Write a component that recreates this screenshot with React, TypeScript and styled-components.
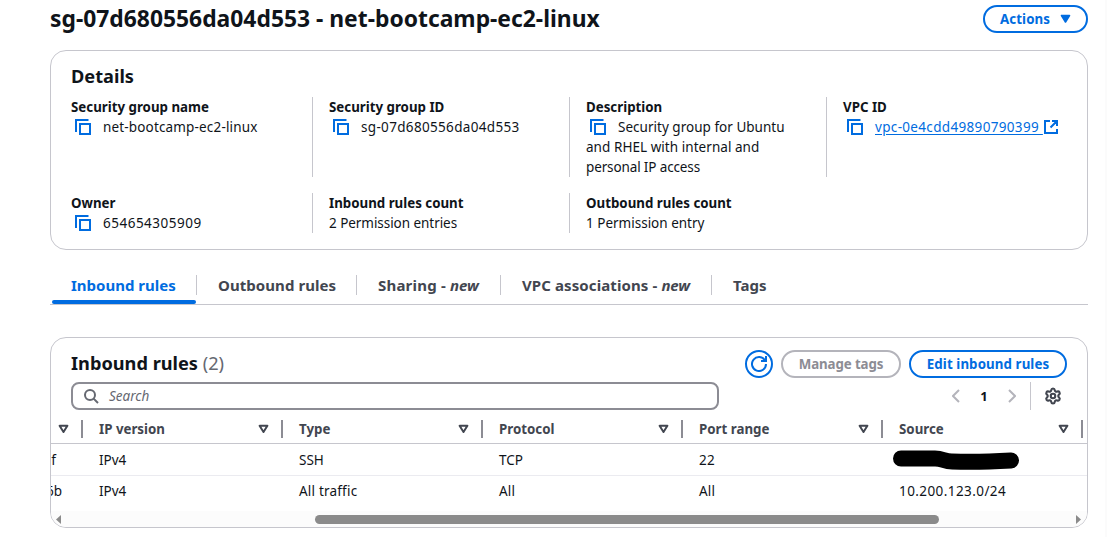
import React from 'react';
import styled, { createGlobalStyle, css } from 'styled-components';
import { Settings } from 'lucide-react';

const blue = '#006ce0';
const ink = '#0f141a';
const slate = '#424650';
const line = '#c6c6cd';

const GlobalStyle = createGlobalStyle`
  *, *::before, *::after { box-sizing: border-box; }
  body {
    margin: 0;
    background: #fff;
    color: ${ink};
    font: 400 13.5px/20px 'Noto Sans', 'Open Sans', sans-serif;
    overflow: hidden;
  }
  svg { display: block; flex: none; }
`;

const Page = styled.main`
  height: 537px;
  padding: 0 17px 0 50px;
  border-right: 2px solid #fbfbfb;
`;

const TitleBar = styled.header`
  display: flex;
  justify-content: space-between;
  height: 50px;
  padding-top: 5px;
`;

const Title = styled.h1`
  margin: -1px 0 0;
  font-size: 22.85px;
  line-height: 30px;
  font-weight: 700;
  white-space: nowrap;
`;

const Button = styled.button<{ $width: number; $disabled?: boolean; $ls?: number }>`
  display: flex;
  align-items: center;
  justify-content: center;
  gap: 10px;
  width: ${(p) => p.$width}px;
  height: 28px;
  padding: 0;
  border: 2px solid ${(p) => (p.$disabled ? '#b4b4bb' : blue)};
  border-radius: 14px;
  background: #fff;
  color: ${(p) => (p.$disabled ? '#8c8c94' : blue)};
  font: 700 13.3px/20px 'Noto Sans', sans-serif;
  letter-spacing: ${(p) => p.$ls ?? 0}px;
  white-space: nowrap;
`;

const Card = styled.section`
  border: 1px solid ${line};
  border-radius: 16px;
  background: #fff;
  overflow: hidden;
`;

const DetailsCard = styled(Card)`
  height: 200px;
  padding: 14px 20px 0;
`;

const CardTitle = styled.h2`
  margin: 0;
  font-size: 18.2px;
  line-height: 22px;
  font-weight: 700;
`;

const Count = styled.span`
  font-weight: 400;
  color: #656871;
`;

const DetailGrid = styled.dl`
  display: grid;
  grid-template-columns: 241px 257px 257px 1fr;
  grid-template-rows: 80px 40px;
  row-gap: 16px;
  margin: 10px 0 0;
`;

const Detail = styled.div<{ $divided?: boolean }>`
  white-space: nowrap;
  ${(p) =>
    p.$divided &&
    css`
      padding-left: 16px;
      border-left: 1px solid ${line};
    `}
`;

const Label = styled.dt`
  font-size: 13.3px;
  font-weight: 700;
`;

const Value = styled.dd`
  margin: 0;
`;

const ValueLine = styled.span<{ $ls?: number }>`
  display: flex;
  align-items: center;
  height: 20px;
  letter-spacing: ${(p) => p.$ls ?? 0}px;
`;

const CopySlot = styled.span`
  padding: 0 12px 0 4px;
`;

const VpcLink = styled.a`
  display: flex;
  align-items: center;
  color: ${blue};
  white-space: pre;
  text-decoration: underline;
  text-underline-offset: 2px;
`;

const TabBar = styled.nav`
  display: flex;
  height: 33px;
  margin-top: 22px;
  border-bottom: 1px solid ${line};
`;

const Tab = styled.a<{ $width: number; $active?: boolean; $last?: boolean; $ls?: number }>`
  position: relative;
  width: ${(p) => p.$width}px;
  height: 20px;
  margin-top: 3px;
  padding-left: 21px;
  border-right: ${(p) => (p.$last ? 0 : 1)}px solid ${line};
  color: ${(p) => (p.$active ? blue : slate)};
  font-size: 15px;
  font-weight: 700;
  letter-spacing: ${(p) => p.$ls ?? 0}px;
  white-space: nowrap;
  &::after {
    content: '';
    display: ${(p) => (p.$active ? 'block' : 'none')};
    position: absolute;
    left: 2px;
    right: 0;
    top: 25px;
    height: 4px;
    border-radius: 2px;
    background: ${blue};
  }
`;

const New = styled.em`
  letter-spacing: -0.1px;
`;

const RulesCard = styled(Card)`
  height: 191px;
  margin-top: 32px;
`;

const CardHeader = styled.div`
  display: flex;
  justify-content: space-between;
  height: 40px;
  padding: 12px 20px 0;
`;

const HeaderTitle = styled(CardTitle)`
  margin-top: 2px;
`;

const Buttons = styled.div`
  display: flex;
  gap: 8px;
`;

const Tools = styled.div`
  display: flex;
  justify-content: space-between;
  height: 36px;
  padding: 4px 25px 0 20px;
`;

const SearchBox = styled.label`
  display: flex;
  align-items: center;
  gap: 10px;
  width: 648px;
  height: 28px;
  padding-left: 10px;
  border: 2px solid #8c8c94;
  border-radius: 8px;
  color: #656871;
  font-style: italic;
`;

const Pager = styled.div`
  display: flex;
  align-items: center;
  height: 28px;
  font-size: 13px;
  font-weight: 700;
`;

const PageNumber = styled.span`
  width: 48px;
  text-align: center;
`;

const PagerRule = styled.span`
  width: 1px;
  height: 28px;
  margin: 0 13px 0 14px;
  background: ${line};
`;

const HeadRow = styled.div`
  display: flex;
  align-items: center;
  height: 30px;
  border-bottom: 1px solid ${line};
`;

const HeadCell = styled.div<{ $narrow?: boolean }>`
  display: flex;
  align-items: center;
  justify-content: space-between;
  flex: none;
  width: ${(p) => (p.$narrow ? 32 : 200)}px;
  height: 18px;
  padding: 0 12.5px 0 ${(p) => (p.$narrow ? 6.5 : 16)}px;
  border-right: 2px solid #8c8c94;
  color: ${slate};
  font-size: 13.3px;
  font-weight: 700;
`;

const Row = styled.div<{ $divided?: boolean }>`
  display: flex;
  align-items: center;
  height: ${(p) => (p.$divided ? 32 : 30)}px;
  border-bottom: ${(p) => (p.$divided ? 1 : 0)}px solid #ebebf0;
`;

const IdCell = styled.div<{ $tail: number }>`
  display: flex;
  justify-content: flex-end;
  flex: none;
  width: 32px;
  padding-right: ${(p) => p.$tail}px;
  overflow: hidden;
`;

const Cell = styled.div<{ $ls?: number }>`
  flex: none;
  width: 200px;
  padding-left: 16px;
  letter-spacing: ${(p) => p.$ls ?? 0}px;
`;

const RedactedCell = styled(Cell)`
  padding: 1px 0 0 10px;
`;

const ScrollTrack = styled.div`
  display: flex;
  align-items: center;
  height: 16px;
  margin-top: 5px;
  padding: 0 6px 0 5px;
  background: #fcfcfc;
`;

const ScrollLane = styled.div`
  flex: 1;
  padding-left: 254px;
`;

const ScrollThumb = styled.div`
  width: 624px;
  height: 9px;
  border-radius: 5px;
  background: #8b8b8b;
`;

const CopyIcon = () => (
  <svg width="16" height="16" fill="none" stroke={blue} strokeWidth="2">
    <path d="M1 13V1H13.5M5 5H15V15H5Z" />
  </svg>
);

const ExternalIcon = () => (
  <svg width="16" height="16" fill="none" stroke={blue} strokeWidth="2">
    <path d="M7 2H2V14H14V10M9 2H14V7M14 2L7.5 8.5" />
  </svg>
);

const RefreshIcon = () => (
  <svg width="16" height="16" fill="none" stroke={blue} strokeWidth="2">
    <path d="M15 8A7 7 0 1 1 14 4.4M15 0V5H10" />
  </svg>
);

const SearchIcon = () => (
  <svg width="16" height="16" fill="none" stroke="#656871" strokeWidth="2">
    <circle cx="7" cy="7" r="5" />
    <path d="M10.6 10.6L15 15" />
  </svg>
);

const CaretIcon = () => (
  <svg width="11" height="10">
    <path d="M1.5 1.5H9.5L5.5 8Z" fill={blue} stroke={blue} strokeWidth="1.6" strokeLinejoin="round" />
  </svg>
);

const SortIcon = () => (
  <svg width="11" height="10">
    <path d="M1.6 1.8H9.4L5.5 8Z" fill="none" stroke={slate} strokeWidth="2" strokeLinejoin="round" />
  </svg>
);

const Chevron = ({ next }: { next?: boolean }) => (
  <svg width="8" height="14" fill="none" stroke="#b4b4bb" strokeWidth="2">
    <path d={next ? 'M1 1L7 7L1 13' : 'M7 1L1 7L7 13'} />
  </svg>
);

const Redaction = () => (
  <svg width="127" height="20" fill="none" stroke="#000" strokeWidth="16" strokeLinecap="round" strokeLinejoin="round">
    <path d="M8 8.5H42C50 8.5 51 11.5 59 11.5C78 12.3 98 11.7 118 10.5" />
  </svg>
);

const ScrollArrow = ({ right }: { right?: boolean }) => (
  <svg width="5" height="9">
    <path d={right ? 'M0 0L5 4.5L0 9Z' : 'M5 0L0 4.5L5 9Z'} fill="#8b8b8b" />
  </svg>
);

const columns = ['IP version', 'Type', 'Protocol', 'Port range', 'Source'];

export default function App() {
  return (
    <Page>
      <GlobalStyle />
      <TitleBar>
        <Title>sg-07d680556da04d553 - net-bootcamp-ec2-linux</Title>
        <Button $width={105} $ls={0.1}>
          Actions <CaretIcon />
        </Button>
      </TitleBar>

      <DetailsCard>
        <CardTitle>Details</CardTitle>
        <DetailGrid>
          <Detail>
            <Label>Security group name</Label>
            <Value>
              <ValueLine $ls={0.16}><CopySlot><CopyIcon /></CopySlot>net-bootcamp-ec2-linux</ValueLine>
            </Value>
          </Detail>
          <Detail $divided>
            <Label>Security group ID</Label>
            <Value>
              <ValueLine $ls={0.33}><CopySlot><CopyIcon /></CopySlot>sg-07d680556da04d553</ValueLine>
            </Value>
          </Detail>
          <Detail $divided>
            <Label>Description</Label>
            <Value>
              <ValueLine $ls={0.02}><CopySlot><CopyIcon /></CopySlot>Security group for Ubuntu</ValueLine>
              <ValueLine $ls={0.05}>and RHEL with internal and</ValueLine>
              <ValueLine $ls={-0.13}>personal IP access</ValueLine>
            </Value>
          </Detail>
          <Detail $divided>
            <Label>VPC ID</Label>
            <Value>
              <ValueLine $ls={0.33}>
                <CopySlot><CopyIcon /></CopySlot>
                <VpcLink>vpc-0e4cdd49890790399 <ExternalIcon /></VpcLink>
              </ValueLine>
            </Value>
          </Detail>
          <Detail>
            <Label>Owner</Label>
            <Value>
              <ValueLine $ls={0.5}><CopySlot><CopyIcon /></CopySlot>654654305909</ValueLine>
            </Value>
          </Detail>
          <Detail $divided>
            <Label>Inbound rules count</Label>
            <Value><ValueLine $ls={-0.05}>2 Permission entries</ValueLine></Value>
          </Detail>
          <Detail $divided>
            <Label>Outbound rules count</Label>
            <Value><ValueLine>1 Permission entry</ValueLine></Value>
          </Detail>
        </DetailGrid>
      </DetailsCard>

      <TabBar>
        <Tab $width={147} $active>Inbound rules</Tab>
        <Tab $width={160} $ls={0.06}>Outbound rules</Tab>
        <Tab $width={144} $ls={0.2}>Sharing - <New>new</New></Tab>
        <Tab $width={211} $ls={0.1}>VPC associations - <New>new</New></Tab>
        <Tab $width={80} $last>Tags</Tab>
      </TabBar>

      <RulesCard>
        <CardHeader>
          <HeaderTitle>Inbound rules <Count>(2)</Count></HeaderTitle>
          <Buttons>
            <Button $width={28}><RefreshIcon /></Button>
            <Button $width={120} $disabled $ls={-0.1}>Manage tags</Button>
            <Button $width={158} $ls={0.1}>Edit inbound rules</Button>
          </Buttons>
        </CardHeader>
        <Tools>
          <SearchBox><SearchIcon />Search</SearchBox>
          <Pager>
            <Chevron />
            <PageNumber>1</PageNumber>
            <Chevron next />
            <PagerRule />
            <Settings size={18} color={slate} strokeWidth={2.8} />
          </Pager>
        </Tools>
        <HeadRow>
          <HeadCell $narrow><SortIcon /></HeadCell>
          {columns.map((c) => (
            <HeadCell key={c}>{c}<SortIcon /></HeadCell>
          ))}
        </HeadRow>
        <Row $divided>
          <IdCell $tail={27}>f</IdCell>
          <Cell>IPv4</Cell>
          <Cell>SSH</Cell>
          <Cell>TCP</Cell>
          <Cell $ls={0.4}>22</Cell>
          <RedactedCell><Redaction /></RedactedCell>
        </Row>
        <Row>
          <IdCell $tail={21}>6b</IdCell>
          <Cell>IPv4</Cell>
          <Cell $ls={0.2}>All traffic</Cell>
          <Cell $ls={0.2}>All</Cell>
          <Cell $ls={0.2}>All</Cell>
          <Cell $ls={0.42}>10.200.123.0/24</Cell>
        </Row>
        <ScrollTrack>
          <ScrollArrow />
          <ScrollLane><ScrollThumb /></ScrollLane>
          <ScrollArrow right />
        </ScrollTrack>
      </RulesCard>
    </Page>
  );
}
